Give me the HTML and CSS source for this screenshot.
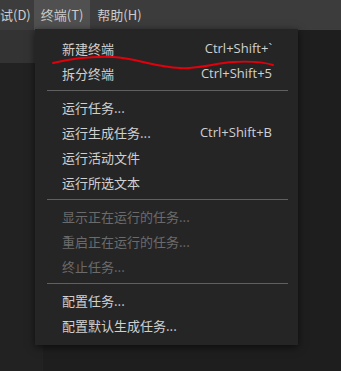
FILE: index.html
```html
<!DOCTYPE html>
<html lang="zh-CN">
    <head>
        <meta charset="UTF-8">
        <title>终端菜单</title>
        <link rel="stylesheet" href="styles.css">
    </head>
    <body>
        <div class="menubar">
            <div class="menubar-item first">试(D)</div>
            <div class="menubar-item active">终端(T)</div>
            <div class="menubar-item">帮助(H)</div>
        </div>

        <div class="workspace">
            <div class="sidebar">
                <div class="sidebar-tab"></div>
            </div>
            <div class="editor"></div>
        </div>

        <div class="menu">
            <div class="menu-item"><span>新建终端</span><span class="keys">Ctrl+Shift+`</span></div>
            <div class="menu-item"><span>拆分终端</span><span class="keys">Ctrl+Shift+5</span></div>
            <div class="separator"></div>
            <div class="menu-item"><span>运行任务...</span></div>
            <div class="menu-item"><span>运行生成任务...</span><span class="keys">Ctrl+Shift+B</span></div>
            <div class="menu-item"><span>运行活动文件</span></div>
            <div class="menu-item"><span>运行所选文本</span></div>
            <div class="separator"></div>
            <div class="menu-item disabled"><span>显示正在运行的任务...</span></div>
            <div class="menu-item disabled"><span>重启正在运行的任务...</span></div>
            <div class="menu-item disabled"><span>终止任务...</span></div>
            <div class="separator"></div>
            <div class="menu-item"><span>配置任务...</span></div>
            <div class="menu-item"><span>配置默认生成任务...</span></div>

            <!-- red pen scribble under the first item -->
            <svg class="scribble" width="263" height="50" viewBox="0 0 263 50">
                <path d="M18 34 C35 30, 55 27, 78 28 C100 29, 120 38, 145 39 C165 40, 180 34, 198 33 C215 32, 228 33, 238 36"
                      fill="none" stroke="#e3000c" stroke-width="1.9" stroke-linecap="round"/>
            </svg>
        </div>
    </body>
</html>
```

FILE: styles.css
```css
body {
margin: 0;
background-color: #1e1e1e;
font-family: "Noto Sans CJK SC", "Noto Sans", sans-serif;
font-size: 13px;
color: #cccccc;
width: 341px;
height: 371px;
overflow: hidden;
}

/* Menu bar */
.menubar {
display: flex;
height: 30px;
background-color: #3c3c3c;
}

.menubar-item {
padding: 0 7px;
line-height: 30px;
color: #cccccc;
}

.menubar-item.first {
padding: 0 3px 0 0;
}

.menubar-item.active {
background-color: #505050;
}

/* Workspace behind the menu */
.workspace {
display: flex;
height: 341px;
}

.sidebar {
width: 43px;
background-color: #222222;
}

.sidebar-tab {
width: 35px;
height: 33px;
background-color: #333333;
}

.editor {
flex: 1;
background-color: #1e1e1e;
}

/* Dropdown */
.menu {
position: absolute;
left: 35px;
top: 29px;
width: 263px;
padding: 7px 0 7px;
background-color: #252526;
box-shadow: 0 2px 8px rgba(0, 0, 0, 0.6);
}

.menu-item {
display: flex;
justify-content: space-between;
height: 25px;
line-height: 25px;
padding: 0 26px 0 27px;
color: #d0d0d0;
}

.menu-item.disabled {
color: #6b6b6b;
}

.keys {
font-family: "Open Sans", "Liberation Sans", sans-serif;
}

.separator {
height: 1px;
margin: 4px 10px 4px 12px;
background-color: #606060;
}

.scribble {
position: absolute;
left: 0;
top: 0;
}
```
